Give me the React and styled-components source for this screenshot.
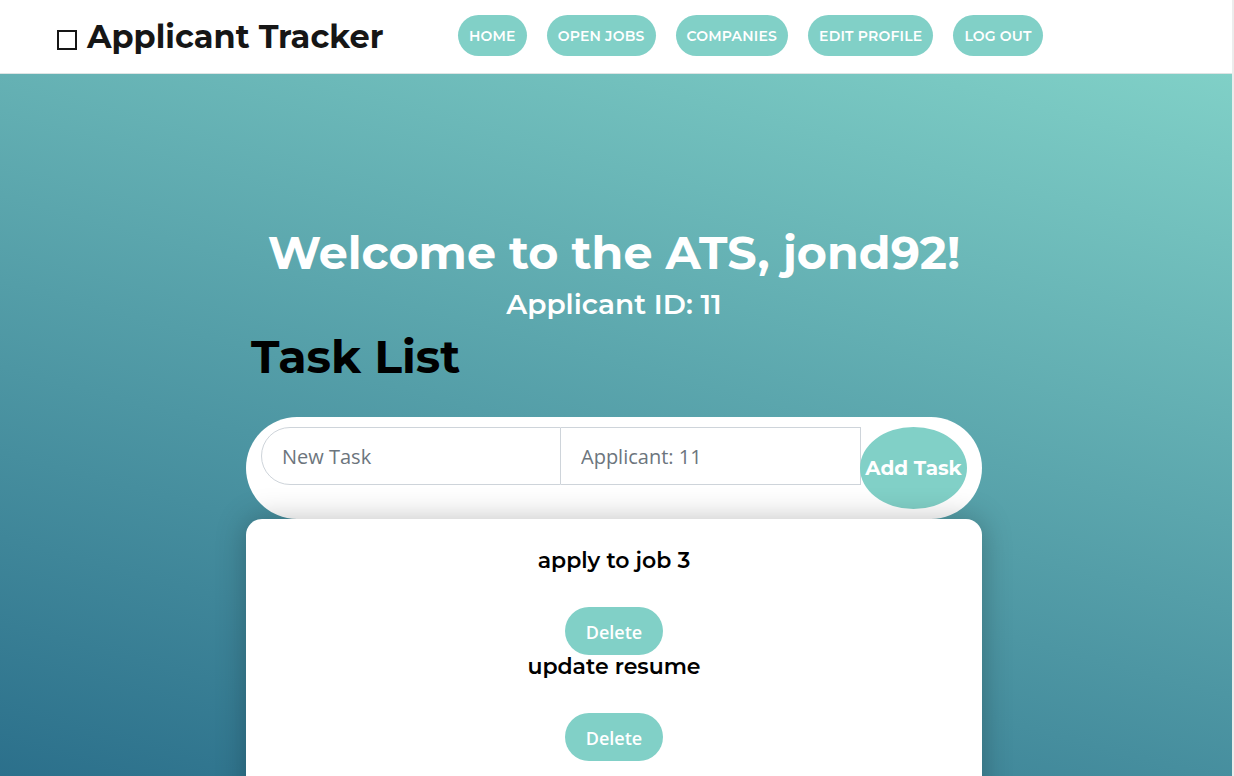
import React from "react";
import styled, { createGlobalStyle } from "styled-components";

const GlobalStyle = createGlobalStyle`
  html { background: #ececec; }
  body {
    margin: 0;
    width: 1232px;
    font-family: Montserrat, "DejaVu Sans", sans-serif;
    overflow: hidden;
    height: 776px;
  }
  * { box-sizing: border-box; }
`;

const Head = "Montserrat, 'DejaVu Sans', sans-serif";
const Body = "'Open Sans', 'Noto Sans', sans-serif";

const Header = styled.header`
  height: 74px;
  background: #fff;
  border-bottom: 1px solid #dde4e4;
  display: flex;
  align-items: center;
  padding-left: 57px;
`;

const Brand = styled.div`
  display: flex;
  align-items: center;
  gap: 10px;
  font-family: ${Head};
  font-weight: 700;
  font-size: 32px;
  color: #161616;
  width: 401px;
`;

const BoxIcon = styled.span`
  display: inline-block;
  width: 20px;
  height: 20px;
  border: 2.5px solid #161616;
  margin-top: 6px;
`;

const Nav = styled.nav`
  display: flex;
  gap: 20px;
  margin-top: -2px;
`;

const NavButton = styled.button`
  height: 41px;
  border: none;
  border-radius: 21px;
  background: #81d0c7;
  color: #fff;
  font-family: ${Head};
  font-weight: 600;
  font-size: 14px;
  letter-spacing: 0.2px;
  text-transform: uppercase;
  padding: 0 11px;
`;

const Main = styled.main`
  min-height: 1000px;
  background: linear-gradient(15deg, #13547a 0%, #80d0c7 100%);
  background-size: 100% 1000px;
  display: flex;
  flex-direction: column;
  align-items: center;
  padding-top: 150px;
  padding-right: 4px;
`;

const Column = styled.div`
  width: 736px;
  display: flex;
  flex-direction: column;
`;

const Welcome = styled.h1`
  margin: 0;
  font-family: ${Head};
  font-size: 46px;
  line-height: 58px;
  font-weight: 700;
  color: #fff;
  text-align: center;
`;

const SubTitle = styled.h3`
  margin: 5px 0 0;
  font-family: ${Head};
  font-size: 28px;
  line-height: 34px;
  font-weight: 600;
  color: #fff;
  text-align: center;
`;

const TaskTitle = styled.h1`
  margin: 7px 0 31px 5px;
  font-family: ${Head};
  font-size: 46px;
  line-height: 58px;
  font-weight: 700;
  color: #000;
`;

const Form = styled.form`
  background: #fff;
  border-radius: 52px;
  height: 102px;
  padding: 10px 15px;
  display: flex;
  align-items: flex-start;
`;

const Input = styled.input`
  width: 300px;
  height: 58px;
  border: 1px solid #ced4da;
  font-family: ${Body};
  font-size: 20px;
  color: #495057;
  padding: 0 20px;
  background: #fff;
  border-radius: ${(p) => (p.$first ? "29px 0 0 29px" : "0")};
  border-left-width: ${(p) => (p.$first ? "1px" : "0")};
  &::placeholder { color: #6c757d; }
  outline: none;
`;

const AddButton = styled.button`
  width: 107px;
  height: 82px;
  border-radius: 50%;
  border: none;
  background: #81d0c7;
  color: #fff;
  font-family: ${Head};
  font-weight: 700;
  font-size: 20px;
  padding: 0;
  margin-left: -1px;
  white-space: nowrap;
`;

const Card = styled.section`
  background: #fff;
  border-radius: 16px;
  box-shadow: 0 0 30px rgba(0, 0, 0, 0.25);
  padding-top: 30px;
  min-height: 400px;
  display: flex;
  flex-direction: column;
  align-items: center;
`;

const Item = styled.div`
  display: flex;
  flex-direction: column;
  align-items: center;
`;

const ItemTitle = styled.h5`
  margin: 0 0 34px;
  font-family: ${Head};
  font-size: 22px;
  line-height: 24px;
  font-weight: 600;
  color: #000;
`;

const DeleteButton = styled.button`
  width: 98px;
  height: 48px;
  border: none;
  border-radius: 24px;
  background: #81d0c7;
  color: #fff;
  font-family: ${Body};
  font-size: 18px;
  font-weight: 600;
  padding: 2px 0 0;
`;

const tasks = ["apply to job 3", "update resume"];

export default function App() {
  return (
    <>
      <GlobalStyle />
      <Header>
        <Brand>
          <BoxIcon />
          Applicant Tracker
        </Brand>
        <Nav>
          <NavButton>Home</NavButton>
          <NavButton>Open Jobs</NavButton>
          <NavButton>Companies</NavButton>
          <NavButton>Edit Profile</NavButton>
          <NavButton>Log Out</NavButton>
        </Nav>
      </Header>
      <Main>
        <Column>
          <Welcome>Welcome to the ATS, jond92!</Welcome>
          <SubTitle>Applicant ID: 11</SubTitle>
          <TaskTitle>Task List</TaskTitle>
          <Form onSubmit={(e) => e.preventDefault()}>
            <Input $first placeholder="New Task" />
            <Input placeholder="Applicant: 11" />
            <AddButton type="submit">Add Task</AddButton>
          </Form>
          <Card>
            {tasks.map((t) => (
              <Item key={t}>
                <ItemTitle>{t}</ItemTitle>
                <DeleteButton>Delete</DeleteButton>
              </Item>
            ))}
          </Card>
        </Column>
      </Main>
    </>
  );
}
